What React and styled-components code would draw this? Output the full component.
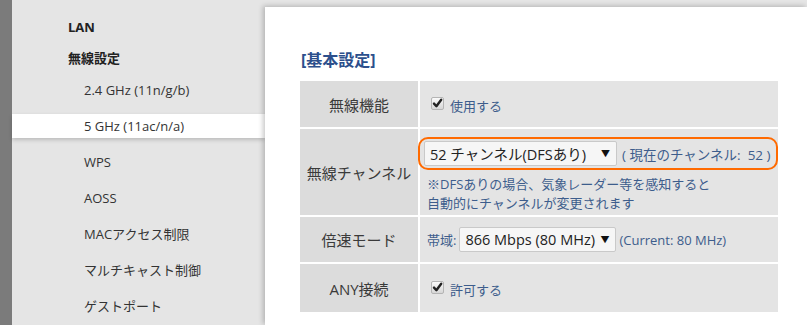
import styled, { createGlobalStyle } from "styled-components";

// ------ GLOBAL ------ //
const GlobalStyle = createGlobalStyle`
    body {
        margin: 0;
        font-family: "Open Sans", "Noto Sans CJK JP", sans-serif;
        background: #e5e5e5;
    }
`

const sideItems = [
    "2.4 GHz (11n/g/b)",
    "5 GHz (11ac/n/a)",
    "WPS",
    "AOSS",
    "MACアクセス制限",
    "マルチキャスト制御",
    "ゲストポート",
]

// SIDEBAR
const Sidebar = () => {
    return (
        <StyledSidebar>
            <StyledHeading>LAN</StyledHeading>
            <StyledHeading>無線設定</StyledHeading>
            <StyledSubList>
                {sideItems.map((item) => (
                    <StyledSideItem key={item} $active={item.startsWith("5 GHz")}>
                        {item}
                    </StyledSideItem>
                ))}
            </StyledSubList>
        </StyledSidebar>
    )
}

const CheckBox = () => (
    <StyledCheck>
        <svg width="11" height="11" viewBox="0 0 11 11">
            <path d="M2 5.6 L4.4 8.2 L9.2 1.8" fill="none" stroke="#222" strokeWidth="2.4" strokeLinecap="round" strokeLinejoin="round" />
        </svg>
    </StyledCheck>
)

const Select = ({ children, width }) => (
    <StyledSelect $width={width}>
        <span>{children}</span>
        <StyledArrow>▼</StyledArrow>
    </StyledSelect>
)

// CONTENT
const Settings = () => {
    return (
        <StyledMain>
            <StyledTitle>[基本設定]</StyledTitle>
            <StyledTable>
                <StyledLabel $h={46}>無線機能</StyledLabel>
                <StyledCell>
                    <StyledCheckRow>
                        <CheckBox />
                        <StyledBlue>使用する</StyledBlue>
                    </StyledCheckRow>
                </StyledCell>

                <StyledLabel $h={86}>無線チャンネル</StyledLabel>
                <StyledCell $top>
                    <StyledHighlight>
                        <Select width={193}>52 チャンネル(DFSあり)</Select>
                        <StyledBlue $size={13.5}>( 現在のチャンネル:&nbsp; 52 )</StyledBlue>
                    </StyledHighlight>
                    <StyledNote>
                        ※DFSありの場合、気象レーダー等を感知すると<br />
                        自動的にチャンネルが変更されます
                    </StyledNote>
                </StyledCell>

                <StyledLabel $h={45}>倍速モード</StyledLabel>
                <StyledCell>
                    <StyledInline>
                        <StyledBlue $size={13}>帯域:</StyledBlue>
                        <Select width={157}>866 Mbps (80 MHz)</Select>
                        <StyledBlue $size={13}>(Current: 80 MHz)</StyledBlue>
                    </StyledInline>
                </StyledCell>

                <StyledLabel $h={48}>ANY接続</StyledLabel>
                <StyledCell>
                    <StyledCheckRow>
                        <CheckBox />
                        <StyledBlue>許可する</StyledBlue>
                    </StyledCheckRow>
                </StyledCell>
            </StyledTable>
        </StyledMain>
    )
}

// ------ COMPONENT ------ //
const App = () => {
    return (
        <>
            <GlobalStyle />
            <StyledPage>
                <StyledDarkBar />
                <Sidebar />
                <Settings />
            </StyledPage>
        </>
    )
}

export default App;

// ------ STYLED COMPONENTS ------ //

const StyledPage = styled.div`
    display: flex;
    width: 807px;
    height: 325px;
    overflow: hidden;
    background: #e5e5e5;
`

const StyledDarkBar = styled.div`
    width: 12px;
    flex-shrink: 0;
    background: #7b7b7b;
`

const StyledSidebar = styled.div`
    width: 253px;
    flex-shrink: 0;
    padding-top: 15px;
    display: flex;
    flex-direction: column;
`

const StyledHeading = styled.div`
    height: 24px;
    line-height: 24px;
    margin-bottom: 7px;
    padding-left: 56px;
    font-size: 13px;
    font-weight: 700;
    color: #222;
`

const StyledSubList = styled.div`
    margin-top: 1px;
    display: flex;
    flex-direction: column;
    gap: 12px;
`

const StyledSideItem = styled.div`
    height: 24px;
    line-height: 24px;
    padding-left: 72px;
    font-size: 13px;
    color: #333;
    background: ${(p) => (p.$active ? "#fff" : "transparent")};
    box-shadow: ${(p) => (p.$active ? "0 2px 4px rgba(0,0,0,0.18)" : "none")};
`

const StyledMain = styled.div`
    flex: 1;
    margin-top: 7px;
    background: #fff;
    position: relative;
    z-index: 1;
    box-shadow: -2px -1px 5px rgba(0, 0, 0, 0.22);
    padding: 42px 0 0 35px;
`

const StyledTitle = styled.div`
    height: 22px;
    line-height: 22px;
    padding-left: 1px;
    font-size: 16px;
    font-weight: 700;
    color: #2c4f8c;
    margin-bottom: 10px;
`

const StyledTable = styled.div`
    width: 476px;
    display: grid;
    grid-template-columns: 118px 1fr;
    gap: 2px;
    background: #fff;
`

const StyledLabel = styled.div`
    height: ${(p) => p.$h}px;
    background: #dcdcdc;
    display: flex;
    align-items: center;
    justify-content: center;
    font-size: 15px;
    color: #3a3a3a;
`

const StyledCell = styled.div`
    background: #e4e4e4;
    padding: ${(p) => (p.$top ? "8px 0 0 5px" : "0 0 0 7px")};
    display: flex;
    flex-direction: column;
    justify-content: ${(p) => (p.$top ? "flex-start" : "center")};
`

const StyledCheckRow = styled.div`
    display: flex;
    align-items: center;
    gap: 6px;
    padding-left: 4px;
    padding-top: 2px;
`

const StyledCheck = styled.span`
    width: 13px;
    height: 13px;
    box-sizing: border-box;
    border: 1px solid #b4b4b4;
    border-radius: 2px;
    background: linear-gradient(#fafafa, #d6d6d6);
    display: flex;
    align-items: center;
    justify-content: center;
    margin-top: -4px;
`

const StyledBlue = styled.span`
    font-size: ${(p) => p.$size || 13}px;
    color: #3d5d8c;
    white-space: nowrap;
`

const StyledHighlight = styled.div`
    align-self: flex-start;
    margin-left: -7px;
    display: flex;
    align-items: center;
    gap: 5px;
    padding: 2px 5px 2px 4px;
    border: 2px solid #ff6a00;
    border-radius: 10px;
`

const StyledSelect = styled.div`
    width: ${(p) => p.$width}px;
    height: 25px;
    box-sizing: border-box;
    display: flex;
    align-items: center;
    justify-content: space-between;
    padding: 0 6px 0 5px;
    background: #f6f6f6;
    border: 1px solid #c9c9c9;
    border-radius: 2px;
    font-size: 14.5px;
    color: #222;
    white-space: nowrap;
`

const StyledArrow = styled.span`
    font-size: 9px;
    color: #111;
`

const StyledNote = styled.div`
    margin-top: 5px;
    padding-left: 2px;
    font-size: 13px;
    line-height: 19px;
    color: #3d5d8c;
`

const StyledInline = styled.div`
    display: flex;
    align-items: center;
    gap: 3px;
`
